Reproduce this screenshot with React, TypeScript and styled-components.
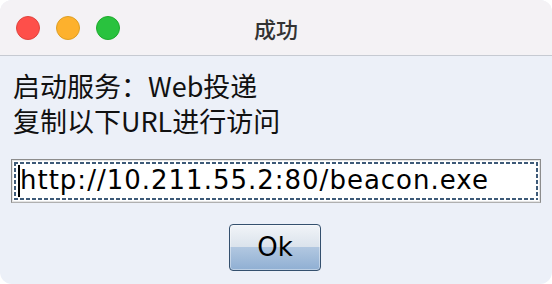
import styled, { createGlobalStyle } from 'styled-components'

const GlobalStyle = createGlobalStyle`
  html, body {
    margin: 0;
    padding: 0;
    background: #ffffff;
  }
`

const LIGHTS = [
	{ fill: '#fe4f4a', edge: '#e0443e' },
	{ fill: '#fdb12d', edge: '#de9f23' },
	{ fill: '#29c23e', edge: '#1dab2c' },
]

// focus ring colour of the text field
const DASH = '#3d5a78'

function App() {
	return (
		<>
			<GlobalStyle />
			<StyledWindow>
				<StyledTitleBar>
					<StyledLights>
						{LIGHTS.map((light) => (
							<StyledLight key={light.fill} $fill={light.fill} $edge={light.edge} />
						))}
					</StyledLights>
					<StyledTitle>成功</StyledTitle>
				</StyledTitleBar>
				<StyledBody>
					<StyledMessage>
						<StyledLine>启动服务：Web投递</StyledLine>
						<StyledLine>复制以下URL进行访问</StyledLine>
					</StyledMessage>
					<StyledField>
						<StyledFocus>
							<StyledCaret />
							<StyledFieldText>http://10.211.55.2:80/beacon.exe</StyledFieldText>
						</StyledFocus>
					</StyledField>
					<StyledButtonRow>
						<StyledButton>Ok</StyledButton>
					</StyledButtonRow>
				</StyledBody>
			</StyledWindow>
		</>
	)
}

const StyledWindow = styled.div`
  width: 552px;
  height: 284px;
  border-radius: 12px;
  overflow: hidden;
  display: flex;
  flex-direction: column;
  background: #ecf0f8;
`
const StyledTitleBar = styled.div`
  position: relative;
  height: 55px;
  flex: none;
  display: flex;
  align-items: center;
  justify-content: center;
  background: #f4f2f5;
  border-bottom: 1px solid #c6cad2;
`
const StyledLights = styled.div`
  position: absolute;
  left: 16px;
  top: 16px;
  display: flex;
  gap: 16px;
`
const StyledLight = styled.span<{ $fill: string; $edge: string }>`
  width: 22px;
  height: 22px;
  border-radius: 50%;
  background: ${(props) => props.$fill};
  border: 1px solid ${(props) => props.$edge};
`
const StyledTitle = styled.div`
  font-family: 'Noto Sans CJK SC', sans-serif;
  font-size: 22px;
  font-weight: 500;
  color: #333333;
`
const StyledBody = styled.div`
  flex: 1;
  display: flex;
  flex-direction: column;
  padding: 12px 11px 0 11px;
`
const StyledMessage = styled.div`
  padding-left: 2px;
  font-family: 'Noto Sans CJK SC', sans-serif;
  font-size: 27px;
  font-weight: 400;
  color: #111111;
`
const StyledLine = styled.div`
  height: 35px;
  line-height: 35px;
  overflow: visible;
`
const StyledField = styled.div`
  margin-top: 21px;
  width: 530px;
  height: 44px;
  box-sizing: border-box;
  border: 1px solid #8c8c8c;
  border-bottom-color: #b0b0b0;
  box-shadow: inset 0 0 0 1px #e4e4e4;
  background: #ffffff;
  padding: 2px;
`
const StyledFocus = styled.div`
  height: 100%;
  box-sizing: border-box;
  display: flex;
  align-items: center;
  padding-left: 4px;
  background-image:
    repeating-linear-gradient(to right, ${DASH} 0 4px, transparent 4px 6px),
    repeating-linear-gradient(to right, ${DASH} 0 4px, transparent 4px 6px),
    repeating-linear-gradient(to bottom, ${DASH} 0 4px, transparent 4px 6px),
    repeating-linear-gradient(to bottom, ${DASH} 0 4px, transparent 4px 6px);
  background-size: 100% 2px, 100% 2px, 2px 100%, 2px 100%;
  background-position: top left, bottom left, top left, top right;
  background-repeat: no-repeat;
`
const StyledCaret = styled.span`
  width: 2px;
  height: 32px;
  background: #000000;
  flex: none;
`
const StyledFieldText = styled.span`
  font-family: 'DejaVu Sans', sans-serif;
  font-size: 26px;
  letter-spacing: 1px;
  color: #000000;
  white-space: nowrap;
  margin-top: -2px;
`
const StyledButtonRow = styled.div`
  display: flex;
  justify-content: center;
  margin-top: 21px;
`
const StyledButton = styled.button`
  width: 92px;
  height: 47px;
  margin-left: -2px;
  border: 1px solid #34506e;
  border-radius: 4px;
  background: linear-gradient(
    to bottom,
    #f1f4f8 0%,
    #dbe3ec 48%,
    #b1c7e0 50%,
    #8fafd3 100%
  );
  box-shadow: inset 0 0 0 1px rgba(255, 255, 255, 0.4);
  font-family: 'DejaVu Sans', sans-serif;
  font-size: 26px;
  color: #000000;
  padding: 0;
  padding-bottom: 2px;
`

export default App
